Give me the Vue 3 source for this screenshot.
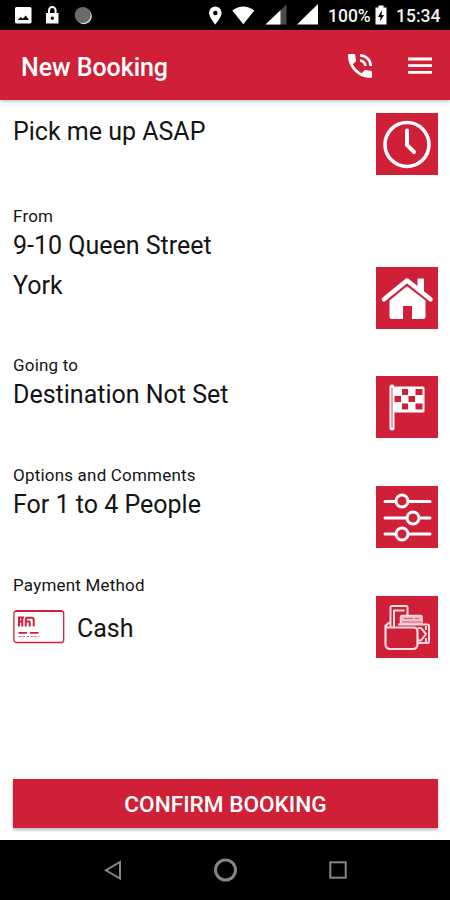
<script setup>
const sections = [
  { id: 'time', lines: [{ text: 'Pick me up ASAP' }] },
  { id: 'home', label: 'From', lines: [{ text: '9-10 Queen Street' }, { text: 'York' }] },
  { id: 'flag', label: 'Going to', lines: [{ text: 'Destination Not Set' }] },
  { id: 'options', label: 'Options and Comments', lines: [{ text: 'For 1 to 4 People' }] },
  { id: 'wallet', label: 'Payment Method', lines: [{ text: 'Cash', card: true }] },
]
</script>

<template>
  <div class="screen">
    <div class="status">
      <svg class="status-icons" width="328" height="30" viewBox="0 0 328 30">
        <rect x="15" y="7" width="16.500" height="16.500" rx="1.500" fill="#fff" />
        <path d="M17.500 20l3.300-3 2 1.700 3-3.200 3.200 4.500z" fill="#000" />
        <path d="M46 13h12.500v10.500H46z" fill="#fff" />
        <path d="M49 13v-2.600a3.300 3.300 0 0 1 6.600 0V13" fill="none" stroke="#fff" stroke-width="2" />
        <circle cx="52.300" cy="18.200" r="1.600" fill="#000" />
        <circle cx="83.800" cy="16.200" r="8" fill="#ddd" />
        <circle cx="82.700" cy="15" r="8" fill="#6b6b6b" />
        <path d="M215.300 6.500a6.300 6.300 0 0 0-6.300 6.300c0 4.700 6.300 11.700 6.300 11.700s6.300-7 6.300-11.700a6.300 6.300 0 0 0-6.300-6.300z" fill="#fff" />
        <circle cx="215.300" cy="13" r="2.200" fill="#000" />
        <path d="M232.300 10.500q11-8 22 0L243.300 24.200z" fill="#fff" />
        <path d="M265.500 24.500l21-20v20z" fill="#4a4a4a" />
        <path d="M265.500 24.500l15-14.300v14.300z" fill="#fff" />
        <path d="M297 24.500l21-20.500v20.500z" fill="#fff" />
      </svg>
      <span class="battery-text">100%</span>
      <svg class="battery" width="12" height="20" viewBox="0 0 12 20">
        <path d="M0.500 2.500h3V0.500h5v2h3v17h-11z" fill="#fff" />
        <path d="M7 5L3 12h2.500L5 16.500 9 10H6.500z" fill="#000" />
      </svg>
      <span class="clock">15:34</span>
    </div>

    <header class="bar">
      <h1>New Booking</h1>
      <svg class="phone" width="32" height="32" viewBox="0 0 24 24" fill="#fff">
        <path d="M20 15.500c-1.250 0-2.450-.2-3.570-.57a1.020 1.020 0 0 0-1.020.24l-2.200 2.200a15.045 15.045 0 0 1-6.590-6.590l2.200-2.210a.96.960 0 0 0 .25-1A11.360 11.360 0 0 1 8.500 4c0-.55-.45-1-1-1H4c-.55 0-1 .45-1 1 0 9.390 7.610 17 17 17 .55 0 1-.45 1-1v-3.500c0-.55-.45-1-1-1zM19 12h2a9 9 0 0 0-9-9v2c3.870 0 7 3.130 7 7zm-4 0h2c0-2.760-2.240-5-5-5v2c1.660 0 3 1.340 3 3z" />
      </svg>
      <svg class="burger" width="24" height="18" viewBox="0 0 24 18"><path d="M0 2h24M0 8.700h24M0 15.400h24" stroke="#fff" stroke-width="2.800" /></svg>
    </header>

    <main class="content">
      <section v-for="s in sections" :key="s.id" class="section" :class="s.id">
        <div class="info">
          <div v-if="s.label" class="label">{{ s.label }}</div>
          <div v-for="l in s.lines" :key="l.text" class="value">
            <svg v-if="l.card" class="card" width="52" height="34" viewBox="0 0 52 34" fill="none" stroke="#cf2038">
              <rect x="0.900" y="1" width="49.800" height="31.500" rx="2.500" stroke-width="1.300" />
              <path d="M2.500 1h46.500" stroke-width="1.800" />
              <path d="M6 7v9.500M9.300 7v9.500M5 7.500h6M5.500 11.500h4M12.700 16.500v-7q0-1.800 2-1.800h4.500q1.500 0 1.500 2.500v6.300M12.500 11.500h5M16.700 16.500v-4" stroke-width="2" />
              <path d="M5.500 22.800h8.500M17 22.800h8.500" stroke-width="1.700" />
              <path d="M5.500 26.500h21" stroke-width="1.200" stroke-dasharray="2.500 1.500" opacity=".65" />
            </svg>
            <span>{{ l.text }}</span>
          </div>
        </div>

        <button class="tile" :aria-label="s.label || 'Time'">
          <svg width="62" height="62" viewBox="0 0 62 62" fill="none" stroke="#fff">
            <g v-if="s.id === 'time'">
              <circle cx="31" cy="31.500" r="22" stroke-width="3.600" />
              <path d="M31 17.500v14.500l7 7" stroke-width="4" stroke-linecap="round" />
            </g>
            <g v-else-if="s.id === 'home'" fill="#fff" stroke="none">
              <path d="M41.500 11.500h6.500v15l-6.500-6z" />
              <path d="M8 32.300L31 13.500l23.500 18.800" fill="none" stroke="#fff" stroke-width="4.500" stroke-linecap="round" stroke-linejoin="round" />
              <path d="M31 15.800L9 33.800M31 15.800l22 18" fill="none" />
              <path d="M13.500 33.500L31 19.300l18.500 14.200v16.300q0 2.200-2.200 2.200H36V39h-9v13H15.700q-2.200 0-2.200-2.200z" />
            </g>
            <g v-else-if="s.id === 'flag'" fill="#fff" stroke="none">
              <rect x="13.500" y="8.500" width="5" height="46" rx="2.500" />
              <rect x="18" y="10.500" width="30.500" height="26" rx="1.500" />
              <path d="M16 12v40" stroke="#e2798a" stroke-width="1.400" />
              <path d="M26 13h6v6h-6zM39.500 13h7v6h-7zM18.500 20h6.500v6h-6.500zM32.500 20h6.500v6h-6.500zM26 27.500h6v6h-6zM39.500 27.500h7v6h-7z" fill="#cf2038" />
            </g>
            <g v-else-if="s.id === 'options'" stroke-width="3" stroke-linecap="round">
              <path d="M9 15.500h45M9 32h45M9 48h45" />
              <circle cx="26" cy="15" r="6" fill="#cf2038" />
              <circle cx="37" cy="32" r="6" fill="#cf2038" />
              <circle cx="26" cy="48" r="6" fill="#cf2038" />
            </g>
            <g v-else stroke="#fbdce1" stroke-width="2" stroke-linejoin="round">
              <path d="M14.500 31V11.500q0-1.500 1.500-1.500h14q1.500 0 1.500 1.500v8M18 31V14.500h10.500M10 31q0-3 4-4.500" />
              <path d="M24.500 29v-8q0-1.500 1.500-1.500h18.500q1.500 0 1.500 1.500v8z" fill="#f3bcc5" stroke-width="1.500" />
              <path d="M28 22.500h9M39 22.500h4M26 26h20" stroke="#dd6074" stroke-width="1" />
              <path d="M22 28.500h29.500q1.500 0 1.500 1.500v15.500q0 1.500-1.500 1.500H42" fill="#cf2038" />
              <path d="M42 32h3l5 6-5 6.500H42" fill="#cf2038" />
              <path d="M50 30v4M50 42v4" />
              <path d="M9.500 29.500v18.500q0 5 5 5H36.500q5 0 5-5V35.500q0-4-4-4H12q-2.500 0-2.500-2z" fill="#cf2038" stroke-width="2.200" />
            </g>
          </svg>
        </button>
      </section>

      <button class="confirm">CONFIRM BOOKING</button>
    </main>

    <nav class="nav">
      <svg width="20" height="24" viewBox="0 0 20 24"><path d="M2.800 12.300L17 4v16.500z" /></svg>
      <svg width="26" height="26" viewBox="0 0 26 26"><circle cx="12.500" cy="13" r="10" stroke-width="3" /></svg>
      <svg width="20" height="20" viewBox="0 0 20 20"><rect x="2.300" y="2.300" width="15.400" height="15.400" /></svg>
    </nav>
  </div>
</template>

<style>
body { margin: 0; background: #fff; }
</style>

<style scoped>
.screen {
  width: 450px;
  height: 900px;
  display: flex;
  flex-direction: column;
  background: #fff;
  color: #141414;
  font-family: Roboto, "Liberation Sans", sans-serif;
  overflow: hidden;
}
.status {
  flex: none;
  display: flex;
  height: 30px;
  background: #000;
  color: #f2f2f2;
  font-size: 17.5px;
  font-weight: 500;
  line-height: 33px;
  white-space: nowrap;
}
.status-icons { flex: none; }
.battery-text { width: 43px; }
.battery { margin: 5px 9px 0 4px; flex: none; }
.bar {
  flex: none;
  display: flex;
  align-items: center;
  height: 70px;
  box-sizing: border-box;
  padding: 0 18px 0 21px;
  background: #cf2038;
  box-shadow: 0 1px 4px rgba(0, 40, 60, 0.35);
  position: relative;
}
h1 {
  flex: 1;
  margin: 5px 0 0;
  color: #fff;
  font-size: 25px;
  font-weight: 500;
  line-height: 32px;
  letter-spacing: -0.05px;
}
.phone { margin: 1px 32px 0 0; }
.burger { margin-top: 1px; }
.content {
  flex: 1;
  display: flex;
  flex-direction: column;
  padding: 13px 12px 12px 13px;
}
.section {
  display: flex;
  justify-content: space-between;
  align-items: flex-end;
  height: 83px;
  margin-bottom: 27px;
}
.time { height: 62px; margin-bottom: 31px; }
.home { height: 123px; margin-bottom: 26px; }
.info { align-self: flex-start; }
.time .info { margin-top: -2px; }
.label { padding-top: 1px; font-size: 17px; line-height: 18px; letter-spacing: 0.2px; }
.value {
  display: flex;
  align-items: center;
  height: 40px;
  font-size: 25px;
}
.wallet .value { margin-top: 14px; gap: 12px; }
.card { margin-top: -2px; }
.tile {
  width: 62px;
  height: 62px;
  padding: 0;
  border: 0;
  background: #cf2038;
}
.tile svg { display: block; }
.confirm {
  margin-top: auto;
  height: 49px;
  padding: 2px 0 0;
  border: 0;
  background: #cf2038;
  box-shadow: 0 2px 3px rgba(0, 0, 0, 0.28);
  color: #fff;
  font: 500 22.6px Roboto, "Liberation Sans", sans-serif;
}
.nav {
  flex: none;
  height: 60px;
  box-sizing: border-box;
  display: flex;
  justify-content: space-between;
  align-items: center;
  padding: 0 102px 0 103px;
  background: #000;
}
.nav svg { fill: none; stroke: #858585; stroke-width: 2; }
</style>
